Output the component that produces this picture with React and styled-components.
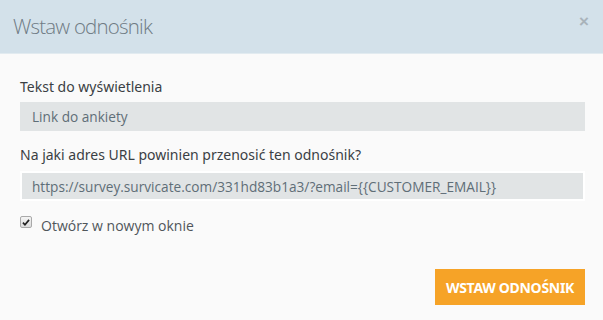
import React, { useState } from "react";
import styled, { createGlobalStyle } from "styled-components";

const Global = createGlobalStyle`
  html, body { margin: 0; padding: 0; background: #fafafa; }
  body { font-family: "Open Sans", "Liberation Sans", sans-serif; }
`;

const Modal = styled.div`
  width: 603px;
  height: 320px;
  background: #fafafa;
  display: flex;
  flex-direction: column;
`;

const Header = styled.div`
  height: 54px;
  background: #d3e1ea;
  border-bottom: 1px solid #e2ebf0;
  box-sizing: border-box;
  display: flex;
  align-items: center;
  justify-content: space-between;
  padding: 0 14px 2px 13px;
`;

const Title = styled.h3`
  margin: 0;
  font: 300 20.5px "Open Sans", sans-serif;
  letter-spacing: -0.8px;
  color: #6f7b84;
`;

const Close = styled.button`
  border: 0;
  background: none;
  padding: 0;
  color: #a9b3ba;
  font: 700 17px "Liberation Sans", sans-serif;
  line-height: 1;
  cursor: pointer;
  margin-top: -8px;
`;

const Body = styled.div`
  flex: 1;
  display: flex;
  flex-direction: column;
  padding: 23px 18px 0 20px;
`;

const Label = styled.label`
  display: block;
  font: 400 14px "Noto Sans", sans-serif;
  color: #3a3f44;
  margin-bottom: ${(p) => p.space || 5}px;
  line-height: 20px;
`;

const Field = styled.div`
  margin-bottom: ${(p) => p.gap || 0}px;
`;

const Input = styled.input`
  display: block;
  box-sizing: border-box;
  width: ${(p) => (p.framed ? "561px" : "565px")};
  height: ${(p) => (p.framed ? "26px" : "29px")};
  margin-left: ${(p) => (p.framed ? "2px" : "0")};
  border: 0;
  outline: ${(p) => (p.framed ? "2px solid #ffffff" : "none")};
  background: #e1e4e5;
  padding: 0 ${(p) => (p.framed ? "10px" : "12px")};
  font: 400 13.65px "Open Sans", sans-serif;
  color: #5f6e77;
`;

const CheckRow = styled.label`
  display: flex;
  align-items: center;
  gap: 9px;
  margin-top: 17px;
  font: 400 14px "Open Sans", sans-serif;
  color: #50565b;
  cursor: pointer;
`;

const HiddenBox = styled.input`
  position: absolute;
  opacity: 0;
  width: 0;
  height: 0;
`;

const Box = styled.span`
  width: 10px;
  height: 10px;
  margin-bottom: 7px;
  border: 1px solid #a9a9a9;
  border-radius: 2px;
  background: linear-gradient(#f4f4f4, #dcdcdc);
  display: flex;
  align-items: center;
  justify-content: center;
  svg { display: ${(p) => (p.on ? "block" : "none")}; }
`;

const Footer = styled.div`
  display: flex;
  justify-content: flex-end;
  padding: 0 18px 15px 0;
  margin-top: auto;
`;

const Primary = styled.button`
  width: 150px;
  height: 36px;
  border: 0;
  background: #f6a327;
  color: #ffffff;
  font: 700 14px "Noto Sans", sans-serif;
  letter-spacing: -0.3px;
  text-transform: uppercase;
  cursor: pointer;
`;

export default function App() {
  const [newWin, setNewWin] = useState(true);
  return (
    <>
      <Global />
      <Modal>
        <Header>
          <Title>Wstaw odnośnik</Title>
          <Close aria-label="Zamknij">×</Close>
        </Header>
        <Body>
          <Field gap={14}>
            <Label>Tekst do wyświetlenia</Label>
            <Input defaultValue="Link do ankiety" />
          </Field>
          <Field>
            <Label space={8}>Na jaki adres URL powinien przenosić ten odnośnik?</Label>
            <Input
              framed
              defaultValue="https://survey.survicate.com/331hd83b1a3/?email={{CUSTOMER_EMAIL}}"
            />
          </Field>
          <CheckRow>
            <HiddenBox
              type="checkbox"
              checked={newWin}
              onChange={(e) => setNewWin(e.target.checked)}
            />
            <Box on={newWin}>
              <svg width="8" height="7" viewBox="0 0 9 8">
                <path d="M1 4.2 L3.3 6.6 L8 1" fill="none" stroke="#222" strokeWidth="1.9" />
              </svg>
            </Box>
            Otwórz w nowym oknie
          </CheckRow>
        </Body>
        <Footer>
          <Primary>Wstaw odnośnik</Primary>
        </Footer>
      </Modal>
    </>
  );
}
